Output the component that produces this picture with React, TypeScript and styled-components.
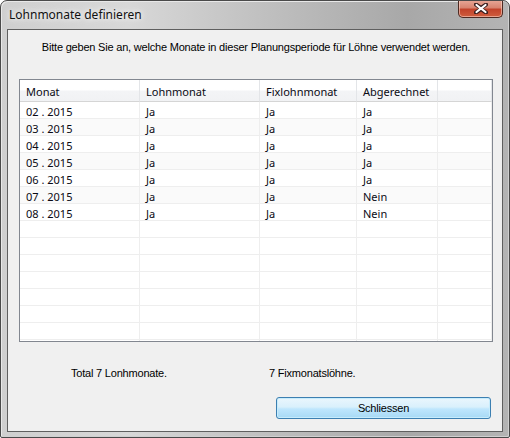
import styled, { createGlobalStyle } from "styled-components";

const GlobalStyle = createGlobalStyle`
  html, body {
    margin: 0;
    padding: 0;
    background: #ffffff;
  }
`;

const Frame = styled.div`
  width: 510px;
  height: 438px;
  box-sizing: border-box;
  border: 1px solid #4a4a4a;
  border-radius: 7px 7px 2px 2px;
  background: linear-gradient(90deg, #cfcfcf 0%, #d8d8d8 25%, #bdbdbd 55%, #a8a8a8 80%, #b4b4b4 100%);
  display: flex;
  flex-direction: column;
  overflow: hidden;
  box-shadow: inset 1px 1px 0 #e8e8e8, inset -1px -1px 0 #d0d0d0;
`;

const TitleBar = styled.div`
  height: 28px;
  flex: none;
  display: flex;
  align-items: flex-start;
  justify-content: space-between;
  padding-left: 8px;
  padding-right: 6px;
`;

const Title = styled.div`
  font-family: "Noto Sans", "Open Sans", sans-serif;
  font-size: 12px;
  color: #111;
  line-height: 28px;
  text-shadow: 0 0 8px #f4f4f4, 0 0 4px #f4f4f4;
`;

const CloseButton = styled.div`
  width: 45px;
  height: 18px;
  margin-top: -1px;
  box-sizing: border-box;
  border: 1px solid #4e2a22;
  border-top: none;
  border-radius: 0 0 5px 5px;
  background: linear-gradient(180deg, #e8a898 0%, #d88470 45%, #c2432b 55%, #cf5d3e 100%);
  box-shadow: inset 0 0 0 1px rgba(255, 220, 210, 0.55);
  display: flex;
  align-items: center;
  justify-content: center;
`;

const Client = styled.div`
  flex: 1;
  margin: 0 6px 5px 6px;
  border: 1px solid #5f5f5f;
  background: #f0f0f0;
  display: flex;
  flex-direction: column;
  padding: 0 9px 0 11px;
  font-family: "Liberation Sans", Arial, sans-serif;
  font-size: 11px;
  letter-spacing: -0.2px;
  color: #000;
`;

const Instruction = styled.div`
  height: 49px;
  line-height: 35px;
  text-align: center;
  flex: none;
`;

const Grid = styled.div`
  height: 263px;
  flex: none;
  box-sizing: border-box;
  border: 1px solid #828790;
  background: #fff;
  display: grid;
  grid-template-columns: 120px 120px 97px 81px 1fr;
  grid-auto-rows: 17px;
  grid-template-rows: 22px;
  align-content: start;
  overflow: hidden;
  font-family: "Noto Sans", "Open Sans", sans-serif;
  font-size: 11px;
  letter-spacing: 0;
  color: #0a0a14;
`;

const HeaderCell = styled.div`
  background: linear-gradient(180deg, #ffffff 0%, #ffffff 45%, #f3f4f6 55%, #f1f2f4 100%);
  border-right: 1px solid #e3e5e8;
  border-bottom: 1px solid #d5d5d5;
  padding: 2px 0 0 6px;
  display: flex;
  align-items: center;
  white-space: nowrap;
`;

const Cell = styled.div<{ $shade: boolean }>`
  background: ${(p) => (p.$shade ? "#fafafa" : "#ffffff")};
  border-right: 1px solid #eeeeee;
  border-bottom: 1px solid #eeeeee;
  padding: 3px 0 0 6px;
  display: flex;
  align-items: center;
  white-space: nowrap;
  box-sizing: border-box;
`;

const Footer = styled.div`
  flex: 1;
  display: flex;
  flex-direction: column;
`;

const Totals = styled.div`
  display: flex;
  padding-top: 25px;
  height: 14px;
`;

const TotalText = styled.div<{ $width: number }>`
  width: ${(p) => p.$width}px;
  flex: none;
`;

const ButtonRow = styled.div`
  display: flex;
  justify-content: flex-end;
  padding-top: 16px;
  padding-right: 2px;
`;

const Button = styled.button`
  width: 215px;
  height: 22px;
  box-sizing: border-box;
  border: 1px solid #3c7fb1;
  border-radius: 3px;
  background: linear-gradient(180deg, #eaf6fd 0%, #d9f0fc 45%, #bee6fd 55%, #a7d9f5 100%);
  box-shadow: inset 0 0 0 1px #c7ecfc;
  font-family: "Liberation Sans", Arial, sans-serif;
  font-size: 11px;
  letter-spacing: -0.2px;
  color: #000;
  padding: 0;
`;

const columns = ["Monat", "Lohnmonat", "Fixlohnmonat", "Abgerechnet", ""];

const rows: string[][] = [
  ["02 . 2015", "Ja", "Ja", "Ja"],
  ["03 . 2015", "Ja", "Ja", "Ja"],
  ["04 . 2015", "Ja", "Ja", "Ja"],
  ["05 . 2015", "Ja", "Ja", "Ja"],
  ["06 . 2015", "Ja", "Ja", "Ja"],
  ["07 . 2015", "Ja", "Ja", "Nein"],
  ["08 . 2015", "Ja", "Ja", "Nein"],
];

const emptyRows = 8;

function App() {
  const allRows = [...rows, ...Array.from({ length: emptyRows }, () => ["", "", "", ""])];
  return (
    <>
      <GlobalStyle />
      <Frame>
        <TitleBar>
          <Title>Lohnmonate definieren</Title>
          <CloseButton>
            <svg width="14" height="11" viewBox="0 0 14 11">
              <path
                d="M2 1.5 L7 5 L12 1.5 M2 9.5 L7 6 L12 9.5"
                stroke="#3a2020"
                strokeWidth="4"
                fill="none"
                strokeLinecap="round"
              />
              <path
                d="M2.5 2 L7 5.5 L11.5 2 M2.5 9 L7 5.5 L11.5 9"
                stroke="#ffffff"
                strokeWidth="2.2"
                fill="none"
                strokeLinecap="round"
              />
            </svg>
          </CloseButton>
        </TitleBar>
        <Client>
          <Instruction>
            Bitte geben Sie an, welche Monate in dieser Planungsperiode für Löhne verwendet werden.
          </Instruction>
          <Grid>
            {columns.map((c, i) => (
              <HeaderCell key={i}>{c}</HeaderCell>
            ))}
            {allRows.map((r, ri) =>
              [...r, ""].map((v, ci) => (
                <Cell key={`${ri}-${ci}`} $shade={ri < rows.length && ri % 2 === 1}>
                  {v}
                </Cell>
              ))
            )}
          </Grid>
          <Footer>
            <Totals>
              <TotalText $width={52} />
              <TotalText $width={198}>Total 7 Lonhmonate.</TotalText>
              <TotalText $width={150}>7 Fixmonatslöhne.</TotalText>
            </Totals>
            <ButtonRow>
              <Button>Schliessen</Button>
            </ButtonRow>
          </Footer>
        </Client>
      </Frame>
    </>
  );
}

export default App;
